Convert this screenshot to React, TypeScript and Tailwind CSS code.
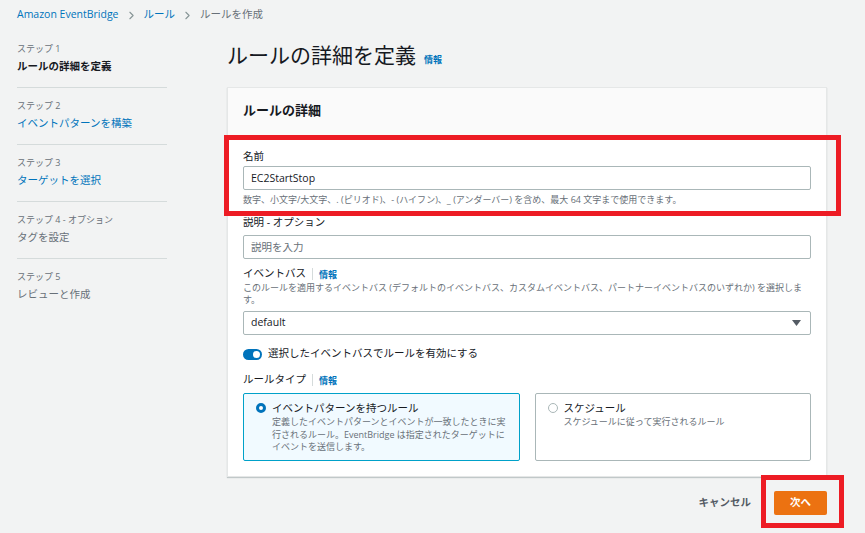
import React, { useState } from 'react';
import { ChevronRight } from 'lucide-react';

const steps = [
  { label: 'ステップ 1', title: 'ルールの詳細を定義', state: 'current' },
  { label: 'ステップ 2', title: 'イベントパターンを構築', state: 'link' },
  { label: 'ステップ 3', title: 'ターゲットを選択', state: 'link' },
  { label: 'ステップ 4 - オプション', title: 'タグを設定', state: 'off' },
  { label: 'ステップ 5', title: 'レビューと作成', state: 'off' },
];

const Info = () => (
  <span className="text-[9px] font-bold text-[#0073bb] leading-none">情報</span>
);

const LabelWithInfo: React.FC<{ text: string }> = ({ text }) => (
  <div className="flex items-center h-[16px] text-[10.5px] text-[#16191f]">
    <span>{text}</span>
    <span className="mx-[6px] h-[12px] w-px bg-[#d5dbdb]" />
    <Info />
  </div>
);

const Tile: React.FC<{
  selected: boolean;
  title: string;
  desc: string;
  onSelect: () => void;
}> = ({ selected, title, desc, onSelect }) => (
  <div
    onClick={onSelect}
    className={`h-[68px] cursor-pointer pl-[12px] pr-[10px] pt-[6px] border rounded-[2px] ${
      selected ? 'border-[#00a1c9] bg-[#f1faff]' : 'border-[#aab7b8] bg-white'
    }`}
  >
    <div className="flex gap-[6px]">
      <span
        className={`mt-[3px] w-[10px] h-[10px] rounded-full shrink-0 ${
          selected ? 'border-[3px] border-[#0073bb] bg-white' : 'border border-[#aab7b8] bg-white'
        }`}
      />
      <div>
        <div className="text-[10.5px] leading-[16px]">{title}</div>
        <div className="text-[9px] leading-[12.5px] text-[#687078]">{desc}</div>
      </div>
    </div>
  </div>
);

const App: React.FC = () => {
  const [name, setName] = useState('EC2StartStop');
  const [desc, setDesc] = useState('');
  const [enabled, setEnabled] = useState(true);
  const [ruleType, setRuleType] = useState<'pattern' | 'schedule'>('pattern');

  return (
    <div className="relative w-[865px] h-[533px] overflow-hidden bg-[#f2f3f3] font-['Open_Sans','Noto_Sans_CJK_JP',sans-serif] text-[#16191f]">
      {/* breadcrumb */}
      <div className="h-[30px] pl-[17px] flex items-center gap-[6px] text-[10.5px]">
        <span className="text-[#0073bb]">Amazon EventBridge</span>
        <ChevronRight className="w-[13px] h-[13px] text-[#879596]" />
        <span className="text-[#0073bb]">ルール</span>
        <ChevronRight className="w-[13px] h-[13px] text-[#879596]" />
        <span className="text-[#687078]">ルールを作成</span>
      </div>

      <div className="flex">
        {/* steps */}
        <nav className="w-[150px] ml-[17px] pt-[12px]">
          {steps.map((s, i) => (
            <div
              key={s.label}
              className={`pb-[11px] ${i > 0 ? 'pt-[11px]' : ''} ${i < steps.length - 1 ? 'border-b border-[#d5dbdb]' : ''}`}
            >
              <div className="text-[9px] leading-[14px] text-[#687078]">{s.label}</div>
              <div
                className={`text-[10.5px] leading-[20px] ${
                  s.state === 'current'
                    ? 'font-bold text-[#16191f]'
                    : s.state === 'link'
                    ? 'text-[#0073bb]'
                    : 'text-[#687078]'
                }`}
              >
                {s.title}
              </div>
            </div>
          ))}
        </nav>

        {/* main */}
        <main className="ml-[60px] w-[600px] pt-[11px]">
          <div className="flex items-baseline gap-[8px] h-[28px] mb-[18px]">
            <h1 className="text-[21px] leading-[28px] font-normal">ルールの詳細を定義</h1>
            <Info />
          </div>

          <section className="bg-white border border-[#e5e7e7] shadow-[0_1px_1px_rgba(0,28,36,0.2)]">
            <div className="h-[47px] bg-[#fafafa] px-[15px] pt-[12px]">
              <h2 className="text-[13px] leading-[20px] font-bold">ルールの詳細</h2>
            </div>

            <div className="px-[15px] pt-[13px] pb-[15px]">
              <div className="text-[10.5px] leading-[16px]">名前</div>
              <input
                value={name}
                onChange={(e) => setName(e.target.value)}
                className="mt-[2px] w-full h-[24px] px-[7px] text-[10.5px] border border-[#aab7b8] rounded-[2px] outline-none"
              />
              <p className="mt-[3px] text-[9px] leading-[13px] text-[#687078]">
                数字、小文字/大文字、. (ピリオド)、- (ハイフン)、_ (アンダーバー) を含め、最大 64 文字まで使用できます。
              </p>

              <div className="mt-[8px] text-[10.5px] leading-[16px]">説明 - オプション</div>
              <input
                value={desc}
                onChange={(e) => setDesc(e.target.value)}
                placeholder="説明を入力"
                className="mt-[5px] w-full h-[24px] px-[7px] text-[10.5px] border border-[#aab7b8] rounded-[2px] outline-none placeholder:text-[#687078]"
              />

              <div className="mt-[7px]">
                <LabelWithInfo text="イベントバス" />
              </div>
              <p className="text-[9px] leading-[12px] text-[#687078]">
                このルールを適用するイベントバス (デフォルトのイベントバス、カスタムイベントバス、パートナーイベントバスのいずれか) を選択します。
              </p>
              <div className="mt-[5px] w-full h-[24px] px-[7px] flex items-center justify-between border border-[#aab7b8] rounded-[2px] text-[10.5px]">
                <span>default</span>
                <svg width="9" height="6" viewBox="0 0 9 6" className="mr-[2px]">
                  <path d="M0 0h9L4.5 6z" fill="#545b64" />
                </svg>
              </div>

              <button
                type="button"
                onClick={() => setEnabled(!enabled)}
                className="mt-[11px] flex items-center gap-[6px] h-[16px]"
              >
                <span
                  className={`relative w-[19px] h-[11px] rounded-full ${enabled ? 'bg-[#0073bb]' : 'bg-[#aab7b8]'}`}
                >
                  <span
                    className={`absolute top-[2px] w-[7px] h-[7px] rounded-full bg-white ${enabled ? 'right-[2px]' : 'left-[2px]'}`}
                  />
                </span>
                <span className="text-[10.5px]">選択したイベントバスでルールを有効にする</span>
              </button>

              <div className="mt-[10px]">
                <LabelWithInfo text="ルールタイプ" />
              </div>

              <div className="mt-[5px] grid grid-cols-2 gap-[15px]">
                <Tile
                  selected={ruleType === 'pattern'}
                  onSelect={() => setRuleType('pattern')}
                  title="イベントパターンを持つルール"
                  desc="定義したイベントパターンとイベントが一致したときに実行されるルール。EventBridge は指定されたターゲットにイベントを送信します。"
                />
                <Tile
                  selected={ruleType === 'schedule'}
                  onSelect={() => setRuleType('schedule')}
                  title="スケジュール"
                  desc="スケジュールに従って実行されるルール"
                />
              </div>
            </div>
          </section>

          <div className="mt-[14px] flex items-center justify-end gap-[23px]">
            <button type="button" className="text-[10.5px] font-bold text-[#545b64]">
              キャンセル
            </button>
            <button
              type="button"
              className="w-[53px] h-[24px] bg-[#ec7211] rounded-[2px] text-[10.5px] font-bold text-white"
            >
              次へ
            </button>
          </div>
        </main>
      </div>

      {/* annotation boxes */}
      <div className="absolute left-[224px] top-[135px] w-[617px] h-[81px] border-[5px] border-[#ed1c24] pointer-events-none" />
      <div className="absolute left-[761px] top-[475px] w-[83px] h-[53px] border-[5px] border-[#ed1c24] pointer-events-none" />
    </div>
  );
};

export default App;
